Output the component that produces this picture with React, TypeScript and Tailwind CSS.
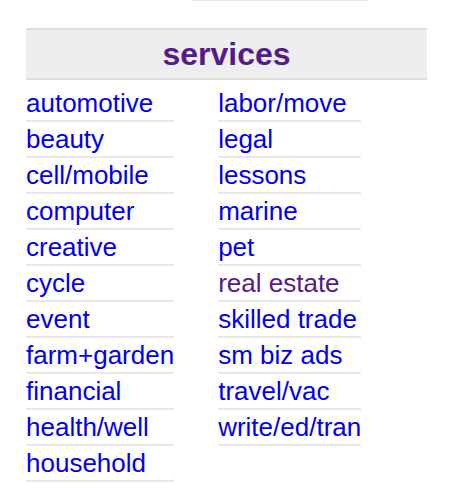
import React from "react";

const col1 = [
  "automotive",
  "beauty",
  "cell/mobile",
  "computer",
  "creative",
  "cycle",
  "event",
  "farm+garden",
  "financial",
  "health/well",
  "household",
];
const col2 = [
  "labor/move",
  "legal",
  "lessons",
  "marine",
  "pet",
  "real estate",
  "skilled trade",
  "sm biz ads",
  "travel/vac",
  "write/ed/tran",
];
const visited = new Set(["real estate"]);

function Col({ items }: { items: string[] }) {
  return (
    <ul className="w-max flex flex-col">
      {items.map((t) => (
        <li key={t} className="border-b-2 border-[#e8e8e8]">
          <a
            href="#"
            className={`block whitespace-nowrap text-[26px] leading-[34px] ${
              visited.has(t) ? "text-[#551a8b]" : "text-[#0000ee]"
            }`}
          >
            {t}
          </a>
        </li>
      ))}
    </ul>
  );
}

export default function App() {
  return (
    <div
      className="w-[468px] h-[500px] bg-white overflow-hidden"
      style={{ fontFamily: '"Liberation Sans", Arial, sans-serif' }}
    >
      <div className="ml-[192px] w-[176px] border-b border-[#e5e5e5]" />
      <div className="ml-[26px] w-[401px] mt-[27px]">
        <div className="h-[52px] border-y-2 border-[#dddddd] bg-[#eeeeee] flex justify-center">
          <a href="#" className="text-[32px] leading-[48px] font-bold text-[#551a8b]">
            services
          </a>
        </div>
        <div className="mt-[6px] flex gap-[44px]">
          <Col items={col1} />
          <Col items={col2} />
        </div>
      </div>
    </div>
  );
}
